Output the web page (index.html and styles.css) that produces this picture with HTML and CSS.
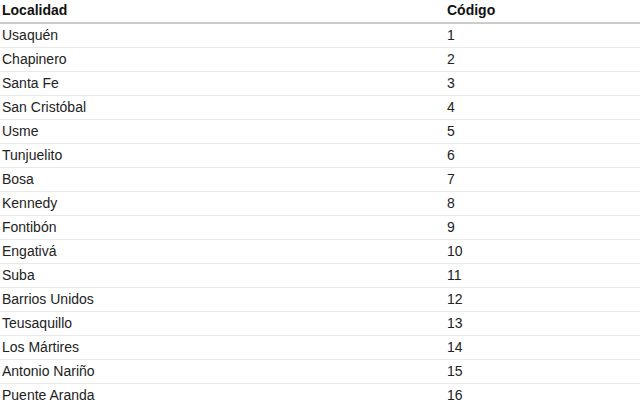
FILE: index.html
```html
<!DOCTYPE html>
<html lang="es">
<head>
<meta charset="utf-8">
<link rel="stylesheet" href="styles.css">
</head>
<body>
<table class="tabla">
  <thead>
    <tr><th class="col-loc">Localidad</th><th>Código</th></tr>
  </thead>
  <tbody>
    <tr><td>Usaquén</td><td>1</td></tr>
    <tr><td>Chapinero</td><td>2</td></tr>
    <tr><td>Santa Fe</td><td>3</td></tr>
    <tr><td>San Cristóbal</td><td>4</td></tr>
    <tr><td>Usme</td><td>5</td></tr>
    <tr><td>Tunjuelito</td><td>6</td></tr>
    <tr><td>Bosa</td><td>7</td></tr>
    <tr><td>Kennedy</td><td>8</td></tr>
    <tr><td>Fontibón</td><td>9</td></tr>
    <tr><td>Engativá</td><td>10</td></tr>
    <tr><td>Suba</td><td>11</td></tr>
    <tr><td>Barrios Unidos</td><td>12</td></tr>
    <tr><td>Teusaquillo</td><td>13</td></tr>
    <tr><td>Los Mártires</td><td>14</td></tr>
    <tr><td>Antonio Nariño</td><td>15</td></tr>
    <tr><td>Puente Aranda</td><td>16</td></tr>
    <tr><td>La Candelaria</td><td>17</td></tr>
  </tbody>
</table>
</body>
</html>
```
FILE: styles.css
```css
html, body {
  margin: 0;
  padding: 0;
  background: #fff;
}
body {
  font-family: "Liberation Sans", Arial, sans-serif;
  font-size: 14px;
  color: #222;
}
.tabla {
  width: 100%;
  border-collapse: collapse;
}
.tabla th,
.tabla td {
  text-align: left;
  padding: 4px 2px;
  line-height: 15px;
}
.tabla th {
  font-weight: bold;
  color: #111;
  border-bottom: 2px solid #ccc;
  padding-top: 3px;
}
.tabla td {
  border-bottom: 1px solid #e8e8e8;
}
.col-loc {
  width: 441px;
}
```
